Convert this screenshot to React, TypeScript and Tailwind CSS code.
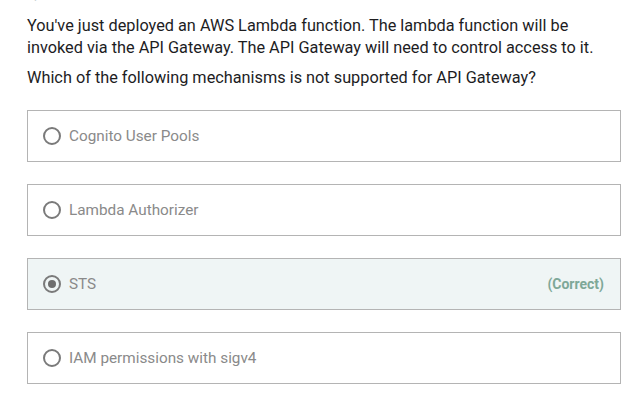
import React from "react";

const options = [
  { label: "Cognito User Pools", selected: false },
  { label: "Lambda Authorizer", selected: false },
  { label: "STS", selected: true },
  { label: "IAM permissions with sigv4", selected: false },
];

export default function App() {
  return (
    <div
      className="w-[642px] h-[402px] overflow-hidden bg-white"
      style={{ fontFamily: 'Roboto, "Liberation Sans", Arial, sans-serif' }}
    >
      <div className="px-[27px] pr-[21px]">
        <div className="h-[3px] overflow-hidden relative">
          <div className="absolute bottom-0 left-0 text-[15px] leading-[18px] text-[#9aa] whitespace-nowrap">
            Question 1: Correct
          </div>
        </div>
        <p className="mt-[12px] text-[16.3px] leading-[22px] text-[#1d1d1f]">
          You've just deployed an AWS Lambda function. The lambda function will be invoked via the API Gateway. The API Gateway will need to control access to it.
        </p>
        <p className="mt-[8px] text-[16.3px] leading-[22px] text-[#1d1d1f]">
          Which of the following mechanisms is not supported for API Gateway?
        </p>
        <div className="mt-[21px] flex flex-col gap-[22px]">
          {options.map((o) => (
            <div
              key={o.label}
              className={`h-[52px] border border-[#b4b4b4] flex items-center pl-[15px] pr-[16px] ${
                o.selected ? "bg-[#eff5f5]" : "bg-white"
              }`}
            >
              <span className="w-[18px] h-[18px] rounded-full border-2 border-[#7a7a7a] flex items-center justify-center">
                {o.selected && <span className="w-[8px] h-[8px] rounded-full bg-[#6e6e6e]" />}
              </span>
              <span className="ml-[8px] text-[15.3px] text-[#8a8a8a]">{o.label}</span>
              {o.selected && (
                <span className="ml-auto text-[14px] font-bold text-[#7ea898]">(Correct)</span>
              )}
            </div>
          ))}
        </div>
      </div>
    </div>
  );
}
